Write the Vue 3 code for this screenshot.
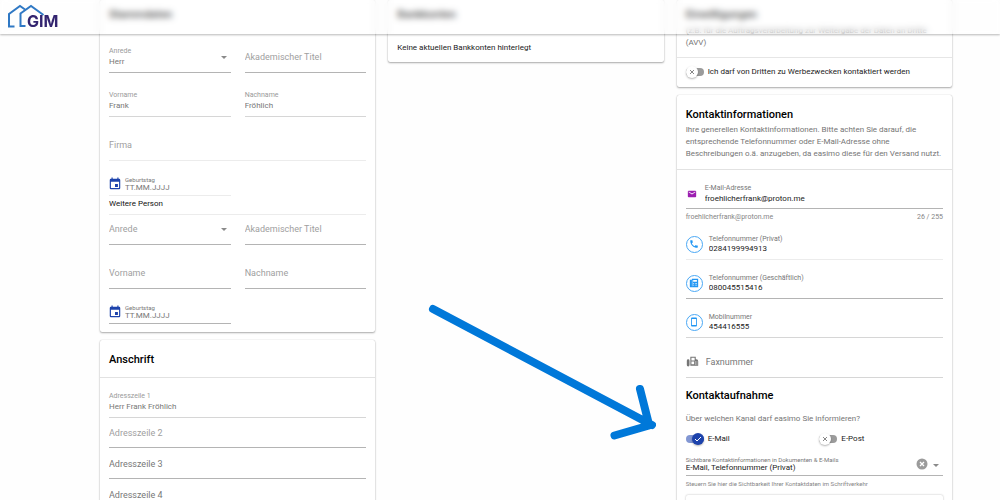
<script setup>
import { ref } from 'vue'

const salutation = ref('Herr')
const firstName = ref('Frank')
const lastName = ref('Fröhlich')
const address1 = ref('Herr Frank Fröhlich')
const email = ref('froehlicherfrank@proton.me')
const thirdParty = ref(false)
const byMail = ref(true)
const byPost = ref(false)
const visible = ref('E-Mail, Telefonnummer (Privat)')

const phones = ref([
  { id: 'privat', label: 'Telefonnummer (Privat)', value: '0284199994913', icon: 'phone', tone: 'faint' },
  { id: 'gesch', label: 'Telefonnummer (Geschäftlich)', value: '080045515416', icon: 'desk', tone: '' },
  { id: 'mobil', label: 'Mobilnummer', value: '454416555', icon: 'mobile', tone: 'light' },
])
</script>

<template>
  <div class="page">
    <header class="topbar">
      <a href="#" aria-label="GIM">
        <svg class="logo" viewBox="0 0 56 26" width="56" height="26">
          <g fill="none" stroke="#2f78c4" stroke-width="2">
            <path d="M7.500 22.500H2V10L13 2L18 5.500" />
            <path d="M18.500 22H13.500V9.500L24 2L36.500 11" />
          </g>
          <text x="20" y="23" font-family="Inter, sans-serif" font-weight="700" font-size="16" fill="#33246f">GIM</text>
        </svg>
      </a>
    </header>

    <main class="columns">
      <div class="column">
        <section class="card first">
          <h2 class="cut-title">Stammdaten</h2>
          <div class="pair opening">
            <label class="field"><span class="lab">Anrede</span>
              <select v-model="salutation"><option>Herr</option><option>Frau</option></select>
              <i class="caret"></i>
            </label>
            <label class="field"><input class="empty" placeholder="Akademischer Titel" aria-label="Akademischer Titel" /></label>
          </div>
          <div class="pair">
            <label class="field light"><span class="lab">Vorname</span><input v-model="firstName" /></label>
            <label class="field light"><span class="lab">Nachname</span><input v-model="lastName" /></label>
          </div>
          <label class="field faint"><input class="empty" placeholder="Firma" aria-label="Firma" /></label>
          <div class="pair">
            <label class="field date faint">
              <svg viewBox="0 0 24 24" width="14" height="14"><path fill="#1d43ac" d="M19 3h-1V1h-2v2H8V1H6v2H5a2 2 0 0 0-2 2v14a2 2 0 0 0 2 2h14a2 2 0 0 0 2-2V5a2 2 0 0 0-2-2zm0 16H5V8h14zm-2-7h-5v5h5z" /></svg>
              <span class="stack"><span class="lab">Geburtstag</span><input placeholder="TT.MM.JJJJ" /></span>
            </label>
          </div>
          <h3 class="sub">Weitere Person</h3>
          <div class="pair short">
            <label class="field">
              <select class="empty" aria-label="Anrede"><option>Anrede</option></select>
              <i class="caret"></i>
            </label>
            <label class="field"><input class="empty" placeholder="Akademischer Titel" aria-label="Akademischer Titel" /></label>
          </div>
          <div class="pair">
            <label class="field"><input class="empty" placeholder="Vorname" aria-label="Vorname" /></label>
            <label class="field"><input class="empty" placeholder="Nachname" aria-label="Nachname" /></label>
          </div>
          <div class="pair">
            <label class="field date">
              <svg viewBox="0 0 24 24" width="14" height="14"><path fill="#1d43ac" d="M19 3h-1V1h-2v2H8V1H6v2H5a2 2 0 0 0-2 2v14a2 2 0 0 0 2 2h14a2 2 0 0 0 2-2V5a2 2 0 0 0-2-2zm0 16H5V8h14zm-2-7h-5v5h5z" /></svg>
              <span class="stack"><span class="lab">Geburtstag</span><input placeholder="TT.MM.JJJJ" /></span>
            </label>
          </div>
        </section>

        <section class="card address">
          <h2>Anschrift</h2>
          <label class="field light"><span class="lab">Adresszeile 1</span><input v-model="address1" /></label>
          <label class="field"><input class="empty" placeholder="Adresszeile 2" aria-label="Adresszeile 2" /></label>
          <label class="field dark"><input class="empty" placeholder="Adresszeile 3" aria-label="Adresszeile 3" /></label>
          <label class="field dark"><input class="empty" placeholder="Adresszeile 4" aria-label="Adresszeile 4" /></label>
        </section>
      </div>

      <div class="column">
        <section class="card bank">
          <h2 class="cut-title">Bankkonten</h2>
          <p>Keine aktuellen Bankkonten hinterlegt</p>
        </section>
      </div>

      <div class="column">
        <section class="card consent">
          <h2 class="cut-title">Einwilligungen</h2>
          <p class="desc">(z.B. für die Auftragsverarbeitung zur Weitergabe der Daten an Dritte (AVV)</p>
          <label class="toggle">
            <span class="switch"><input v-model="thirdParty" type="checkbox" /><i class="knob"><svg viewBox="0 0 10 10"><path :d="thirdParty ? 'M2 5L4 7L8 3' : 'M3 3L7 7M7 3L3 7'" /></svg></i></span>
            Ich darf von Dritten zu Werbezwecken kontaktiert werden
          </label>
        </section>

        <section class="card contact">
          <div class="head">
            <h2>Kontaktinformationen</h2>
            <p class="desc">Ihre generellen Kontaktinformationen. Bitte achten Sie darauf, die entsprechende Telefonnummer oder E-Mail-Adresse ohne Beschreibungen o.ä. anzugeben, da easimo diese für den Versand nutzt.</p>
          </div>

          <label class="line mail">
            <svg viewBox="0 0 24 24" width="10" height="10"><path fill="#9c1fb0" d="M20 4H4a2 2 0 0 0-2 2v12a2 2 0 0 0 2 2h16a2 2 0 0 0 2-2V6a2 2 0 0 0-2-2zm0 4l-8 5l-8-5V6l8 5l8-5z" /></svg>
            <span class="stack"><span class="lab">E-Mail-Adresse</span><input v-model="email" /></span>
          </label>
          <div class="hint"><span>froehlicherfrank@proton.me</span><span>26 / 255</span></div>

          <label v-for="p in phones" :key="p.id" class="line" :class="p.tone">
            <span class="ring">
              <svg viewBox="0 0 24 24" width="10" height="10" fill="#2196f3">
                <path v-if="p.icon === 'phone'" d="M6.600 10.800c1.400 2.800 3.800 5.100 6.600 6.600l2.200-2.200c.3-.3.7-.4 1-.2 1.100.4 2.300.6 3.600.6.600 0 1 .4 1 1V20c0 .6-.4 1-1 1C10.600 21 3 13.400 3 4c0-.6.5-1 1-1h3.500c.6 0 1 .5 1 1 0 1.300.2 2.500.6 3.600.1.300 0 .7-.2 1z" />
                <path v-else-if="p.icon === 'desk'" fill-rule="evenodd" d="M2 4h5V2h15v20H2zM7 5v15h1V5zM10 5v4h9V5zM10 12v2h2v-2zm4 0v2h2v-2zm3 0v2h2v-2zM10 16v2h2v-2zm4 0v2h2v-2zm3 0v2h2v-2z" />
                <path v-else fill-rule="evenodd" d="M7 1h10a2 2 0 0 1 2 2v18a2 2 0 0 1-2 2H7a2 2 0 0 1-2-2V3a2 2 0 0 1 2-2zM7 5v14h10V5z" />
              </svg>
            </span>
            <span class="stack"><span class="lab">{{ p.label }}</span><input v-model="p.value" /></span>
          </label>

          <label class="line fax light">
            <svg viewBox="0 0 24 24" width="13" height="13"><path fill="#757575" fill-rule="evenodd" d="M4 8a2.500 2.500 0 0 0-2.500 2.500v8a2.500 2.500 0 0 0 5 0v-8A2.500 2.500 0 0 0 4 8zM8 3h10v5h1a3.500 3.500 0 0 1 3.500 3.500V20H8zM10 5v5h6V5zM10 12v5h5v-5zM16.500 12v2h1.500v-2zm3 0v2H21v-2zm-3 3.500v2h1.500v-2zm3 0v2H21v-2z" /></svg>
            <input class="empty" placeholder="Faxnummer" aria-label="Faxnummer" />
          </label>

          <h2>Kontaktaufnahme</h2>
          <p class="desc question">Über welchen Kanal darf easimo Sie informieren?</p>
          <div class="toggles">
            <label class="toggle"><span class="switch"><input v-model="byMail" type="checkbox" /><i class="knob"><svg viewBox="0 0 10 10"><path :d="byMail ? 'M2 5L4 7L8 3' : 'M3 3L7 7M7 3L3 7'" /></svg></i></span>E-Mail</label>
            <label class="toggle"><span class="switch"><input v-model="byPost" type="checkbox" /><i class="knob"><svg viewBox="0 0 10 10"><path :d="byPost ? 'M2 5L4 7L8 3' : 'M3 3L7 7M7 3L3 7'" /></svg></i></span>E-Post</label>
          </div>

          <div class="visibility">
            <div class="stack">
              <label class="lab" for="visible">Sichtbare Kontaktinformationen in Dokumenten &amp; E-Mails</label>
              <select id="visible" v-model="visible"><option>E-Mail, Telefonnummer (Privat)</option></select>
            </div>
            <button type="button" aria-label="Auswahl löschen">
              <svg viewBox="0 0 12 12" width="12" height="12"><circle cx="6" cy="6" r="5.500" fill="#9b9b9b" /><path d="M4 4L8 8M8 4L4 8" stroke="#fff" stroke-width="1.300" /></svg>
            </button>
            <i class="caret"></i>
          </div>
          <div class="hint small"><span>Steuern Sie hier die Sichtbarkeit Ihrer Kontaktdaten im Schriftverkehr</span></div>
          <div class="inner"></div>
        </section>
      </div>
    </main>

    <svg class="arrow" viewBox="0 0 228 138" width="228" height="138">
      <path d="M5 5L224 121M212 85L221 120.500M186.500 131.500L221 121.500" />
    </svg>
  </div>
</template>

<style>
body {
  background: #fff;
}
</style>

<style scoped>
.page {
  position: relative;
  height: 100vh;
  overflow: hidden;
  font-family: Roboto, sans-serif;
  font-size: 8px;
  line-height: 12px;
  color: #222;
  background: #fefefe;
}
.page * {
  box-sizing: border-box;
}
.topbar {
  position: absolute;
  z-index: 2;
  top: 0;
  left: 0;
  right: 0;
  height: 34px;
  padding: 4px 7px;
  background: rgba(255, 255, 255, 0.3);
  backdrop-filter: blur(3px);
  box-shadow: 0 1px 2px rgba(0, 0, 0, 0.28);
}
.logo {
  display: block;
  overflow: visible;
}
.columns {
  display: grid;
  grid-template-columns: repeat(3, 1fr);
  gap: 13px;
  padding: 0 48px 0 100px;
}
.column {
  display: flex;
  flex-direction: column;
  gap: 8px;
}
.card {
  padding: 0 9px;
  background: #fff;
  border-radius: 2px;
  box-shadow: 0 1px 2px rgba(0, 0, 0, 0.32), 0 0 1px rgba(0, 0, 0, 0.25);
}
h2,
h3,
p {
  margin: 0;
}
h2 {
  font-size: 11px;
  line-height: 14px;
  font-weight: 500;
  color: #000;
}
.cut-title {
  padding-top: 8px;
}
.first {
  padding-bottom: 8px;
}
.pair {
  display: grid;
  grid-template-columns: 1fr 1fr;
  column-gap: 14px;
}
.field {
  position: relative;
  display: flex;
  flex-direction: column;
  justify-content: flex-end;
  height: 44px;
  padding-bottom: 4px;
  border-bottom: 1px solid #b4b4b4;
  color: #9a9a9a;
}
.opening .field {
  height: 51px;
}
.short .field {
  height: 30px;
}
.lab {
  font-size: 7px;
  line-height: 10px;
  white-space: nowrap;
}
input,
select {
  display: block;
  width: 100%;
  height: 12px;
  margin: 0;
  padding: 0;
  border: 0;
  outline: 0;
  border-radius: 0;
  background: transparent;
  appearance: none;
  font: inherit;
  color: #777;
}
input::placeholder {
  color: #777;
  opacity: 1;
}
.empty {
  height: 22px;
  font-size: 9px;
  color: #a0a0a0;
}
.empty::placeholder {
  color: #a0a0a0;
}
.dark .empty::placeholder,
.fax .empty::placeholder {
  color: #777;
}
.caret {
  position: absolute;
  right: 4px;
  bottom: 13px;
  border: 3px solid transparent;
  border-top-color: #8a8a8a;
  border-bottom: 0;
}
.light {
  border-bottom-color: #d6d6d6;
}
.faint {
  border-bottom-color: #ececec;
}
.date {
  flex-direction: row;
  justify-content: flex-start;
  align-items: center;
  gap: 3px;
  height: 35px;
  padding: 14px 0 2px;
  color: #777;
}
.date .lab {
  font-size: 6px;
  line-height: 8px;
}
.date input {
  height: 9px;
}
.date svg {
  flex: none;
  margin-left: -1px;
}
.stack {
  display: flex;
  flex-direction: column;
  flex: 1;
  min-width: 0;
}
.sub {
  padding: 2px 0 4px;
  border-bottom: 1px solid #ececec;
  font-size: 8px;
  line-height: 12px;
  font-weight: 400;
  color: #111;
}
.address h2 {
  margin: 0 -9px;
  padding: 13px 9px 10px;
  border-bottom: 1px solid #e2e2e2;
}
.address .field {
  height: 30px;
}
.address .field:first-of-type {
  height: 40px;
}
.address .dark {
  height: 31px;
}
.address .empty {
  height: 20px;
}
.bank p {
  padding: 20px 0 8px;
  color: #222;
}
.consent .desc {
  padding: 3px 0 8px;
}
.desc {
  color: #757575;
}
.consent .toggle {
  margin: 0 -9px;
  padding: 8px 9px 9px;
  border-top: 1px solid #e6e6e6;
}
.toggle {
  display: flex;
  align-items: center;
  gap: 4px;
  color: #222;
}
.switch {
  position: relative;
  width: 18px;
  height: 12px;
  flex: none;
}
.switch input {
  width: 18px;
  height: 8px;
  margin-top: 2px;
  border-radius: 4px;
  background: #9b9b9b;
}
.switch input:checked {
  background: #8297d3;
}
.knob {
  position: absolute;
  top: 0;
  left: 0;
  width: 12px;
  height: 12px;
  padding: 1px;
  border-radius: 50%;
  background: #fff;
  box-shadow: 0 1px 2px rgba(0, 0, 0, 0.3);
  pointer-events: none;
}
.knob svg {
  display: block;
  fill: none;
  stroke: #888;
  stroke-width: 1;
}
.switch input:checked + .knob {
  left: 6px;
  background: #1d43ac;
}
.switch input:checked + .knob svg {
  stroke: #fff;
}
.head {
  margin: 0 -9px;
  padding: 13px 9px 9px;
  border-bottom: 1px solid #e2e2e2;
}
.head .desc {
  padding-top: 2px;
}
.line {
  display: flex;
  align-items: center;
  gap: 6px;
  height: 39px;
  padding: 12px 0 4px;
  border-bottom: 1px solid #b4b4b4;
  color: #777;
}
.line.light {
  border-bottom-color: #d6d6d6;
}
.line.faint {
  border-bottom-color: #ececec;
}
.line input:not(.empty) {
  height: 11px;
  color: #222;
}
.line svg {
  flex: none;
}
.line.mail {
  gap: 8px;
  padding: 13px 0 4px 1px;
}
.ring {
  display: flex;
  align-items: center;
  justify-content: center;
  flex: none;
  width: 17px;
  height: 17px;
  border: 1px solid #4aa8f5;
  border-radius: 50%;
}
.hint {
  display: flex;
  justify-content: space-between;
  padding-top: 2px;
  font-size: 7px;
  color: #858585;
}
.hint + .line {
  height: 37px;
  padding: 11px 0 5px;
}
.hint.small {
  font-size: 6px;
}
.line.fax {
  height: 40px;
  gap: 7px;
  padding: 12px 0 4px;
}
.contact h2 + .question {
  padding: 10px 0 8px;
}
.fax + h2 {
  padding-top: 11px;
}
.toggles {
  display: grid;
  grid-template-columns: 1fr 1fr;
  column-gap: 10px;
}
.visibility {
  position: relative;
  display: flex;
  align-items: center;
  height: 31px;
  padding: 11px 15px 3px 0;
  border-bottom: 1px solid #b4b4b4;
  color: #777;
}
.visibility .lab {
  font-size: 6px;
  line-height: 7px;
}
.visibility select {
  height: 9px;
  color: #222;
  line-height: 9px;
}
.visibility .caret {
  bottom: 8px;
  right: 4px;
}
button {
  padding: 0;
  border: 0;
  background: none;
}
button svg {
  display: block;
}
.inner {
  height: 40px;
  margin-top: 5px;
  border-radius: 2px;
  box-shadow: 0 0 2px rgba(0, 0, 0, 0.3);
}
.arrow {
  position: absolute;
  z-index: 3;
  left: 428px;
  top: 304px;
  fill: none;
  stroke: #0078d9;
  stroke-width: 8;
  stroke-linecap: round;
  stroke-linejoin: round;
  pointer-events: none;
}
</style>
